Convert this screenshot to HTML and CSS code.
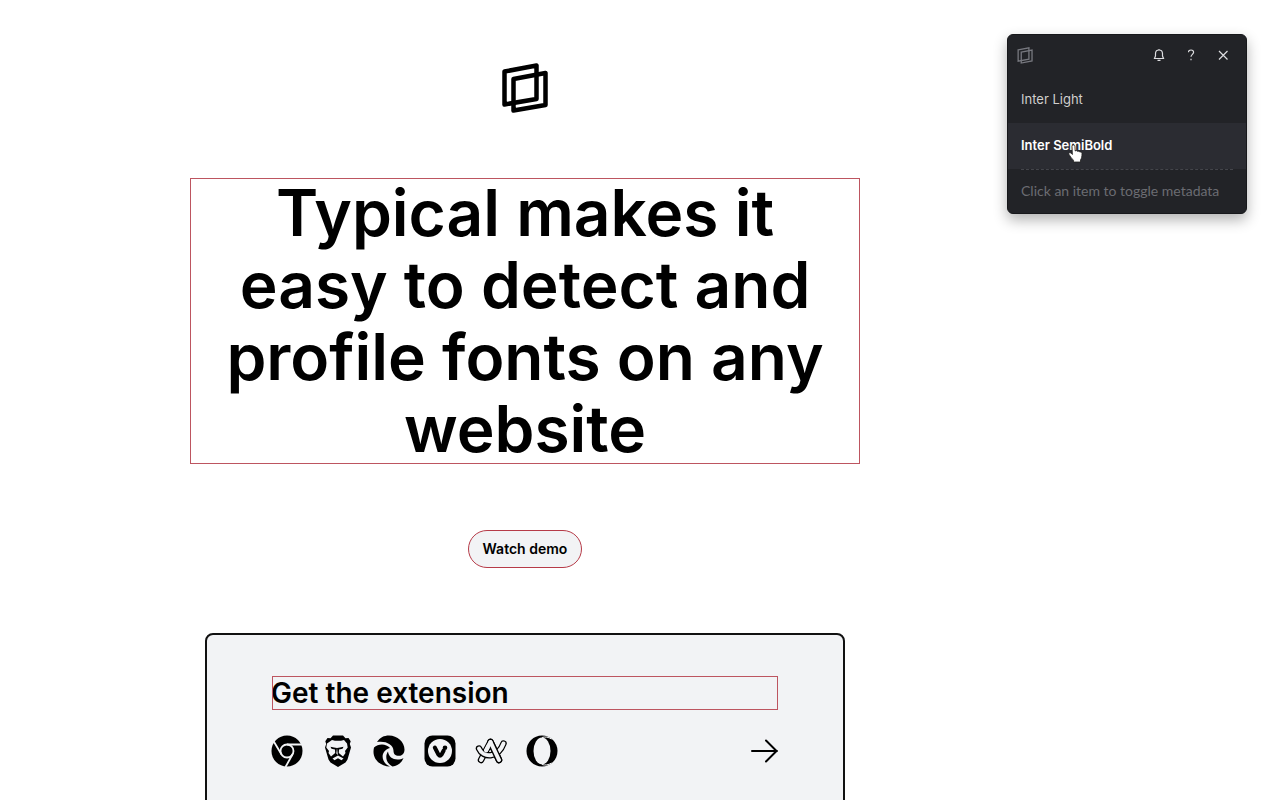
FILE: index.html
```html
<!DOCTYPE html>
<html lang="en">
<head>
<meta charset="utf-8">
<meta name="viewport" content="width=device-width, initial-scale=1">
<title>Typical</title>
<link rel="stylesheet" href="styles.css">
</head>
<body>
<main class="page">
  <svg class="logo" viewBox="0 0 48 52" fill="none" stroke="#000" stroke-width="4.500" stroke-linejoin="round" aria-label="Typical">
    <path d="M3.500 9.500 35.500 3.500V37L3.500 42.500Z"/><path d="M12.500 17 44.500 11V43L12.500 48.500Z"/>
  </svg>
  <h1 class="headline inspected">Typical makes it easy to detect and profile fonts on any website</h1>
  <button class="demo" type="button">Watch demo</button>
  <section class="card">
    <h2 class="card-title inspected">Get the extension</h2>
    <a class="browsers" href="#" aria-label="Get the extension for your browser">
      <svg class="browser" viewBox="0 0 32 32"><circle cx="16" cy="16" r="15.500"/><g fill="none" stroke="#f2f3f5" stroke-width="1.800"><circle cx="16" cy="16" r="6.500"/><path d="M16 9.500H31M10.400 19.300 2.500 6M21.600 19.300 14.500 32"/></g></svg>
      <svg class="browser" viewBox="0 0 32 32"><path d="M11 .5h10l2.500 2.700 3-.2 2.200 3.200-.9 2.800 1.200 3.500-3.500 12-2 3-7.500 4.500-7.500-4.500-2-3L3 12.500 4.200 9l-.9-2.800L5.500 3l3 .2z"/><path fill="#f2f3f5" d="m10 5 3 .7h6l3-.7 3 3.500.7 4-2.700 3.500.5 2-2.500 3.500-3-2.500-1.200-1 .2-3.500 3.500-.8 1-1.900-3.500.7-3 .5.700 5.500L16 20l-1.700-1.500.7-5.500-3-.5-3.500-.7 1 1.900 3.500.8.2 3.500-1.200 1-3 2.500L6.500 18l.5-2-2.700-3.500.7-4zM10.500 23.500l5.500-3 5.500 3-2 1.700-3.500-2-3.500 2z"/></svg>
      <svg class="browser" viewBox="0 0 32 32"><path d="M4 7C7 2.500 11 .5 16 .5c8.500 0 15.500 6.500 15.500 14 0 4-2.500 6.300-5.500 6.300-4 0-5.500-2-5.500-5C20.500 9 12 5.500 4 7z"/><path d="M1 12.500C5 8.500 13 8 17 13c-6 1.500-9 7-6.500 12.500 1 2.500 3 4.500 6.500 6C8 31.500.5 25 .5 17c0-1.500.1-3 .5-4.500z"/><path d="M15 16.500c.5 5 4.500 8 9.500 8 2.300 0 4.300-.5 6-1.500-2 5-6 8-11 8.500-6-3-8-10-4.500-15z"/></svg>
      <svg class="browser" viewBox="0 0 32 32"><rect x=".5" y=".5" width="31" height="31" rx="8"/><circle cx="16" cy="16" r="12" fill="#f2f3f5"/><path d="m10.800 12.500 3.700 7.200q1.500 2.300 3 0l2.200-4.200" fill="none" stroke="#000" stroke-width="4" stroke-linecap="round"/><circle cx="21" cy="12.800" r="2.300"/></svg>
      <svg class="browser" viewBox="0 0 32 32" fill="none" stroke-linecap="round" stroke-linejoin="round"><path d="m6 25 9.500-18 8.500 18" stroke="#000" stroke-width="6.500"/><path d="m6 25 9.500-18 8.500 18" stroke="#f2f3f5" stroke-width="4"/><path d="M4 13.500C8 23 23 23.500 28.500 8.500" stroke="#000" stroke-width="6.500"/><path d="M4 13.500C8 23 23 23.500 28.500 8.500" stroke="#f2f3f5" stroke-width="4"/><path d="M15.500 7 24 25" stroke="#000" stroke-width="6.500"/><path d="M15.500 7 24 25" stroke="#f2f3f5" stroke-width="4"/><path d="m11 15.500 4.500-8.500" stroke="#f2f3f5" stroke-width="4"/></svg>
      <svg class="browser" viewBox="0 0 32 32"><circle cx="16" cy="16" r="15.500"/><ellipse cx="16" cy="16" rx="8.500" ry="13.500" fill="#f2f3f5"/><path d="M16 2.500c3-1 6.500-.5 9.500 1.500M16 29.500c3 1 6.500.5 9.500-1.500" fill="none" stroke="#f2f3f5" stroke-width="1"/></svg>
      <svg class="arrow" viewBox="0 0 28 28" fill="none" stroke="#000" stroke-width="2" stroke-linecap="round" stroke-linejoin="round"><path d="M1 14h25M15 3.500 25.500 14 15 24.500"/></svg>
    </a>
  </section>
</main>
<aside class="panel" aria-label="Detected fonts">
  <header class="panel-bar">
    <svg class="panel-logo" viewBox="0 0 48 52" fill="none" stroke="#77787f" stroke-width="4" aria-hidden="true"><path d="M3 8.500 36 2.500V37L3 43.500Z"/><path d="M12.500 15.500 45.500 9.500V42.500L12.500 49Z"/></svg>
    <button class="tool" type="button" aria-label="Notifications"><svg class="tool-icon" viewBox="0 0 16 16"><path d="M3.500 11.500h9L11.500 9V6.800C11.500 4.500 10 3 8 3S4.500 4.500 4.500 6.800V9zM8 3V2M6.500 13.300h3"/></svg></button>
    <button class="tool" type="button" aria-label="Help"><svg class="tool-icon" viewBox="0 0 16 16"><path d="M5.500 5.300C5.500 3.700 6.500 3 8 3s2.600.8 2.600 2.300c0 2-2.600 2.200-2.600 4.500M8 11.700v1.500"/></svg></button>
    <button class="tool" type="button" aria-label="Close"><svg class="tool-icon" viewBox="0 0 16 16"><path d="m4 4 8.500 8.500M12.500 4 4 12.500"/></svg></button>
  </header>
  <button class="font light" type="button">Inter Light</button>
  <button class="font semibold" type="button">Inter SemiBold
    <svg class="pointer" viewBox="0 0 16 20" aria-hidden="true"><path d="M4 2.500C4 .5 6.800.5 6.900 2.500L7.200 7c1-.7 2-.4 2.400.4 1-.5 1.900-.2 2.200.7 1-.3 2.200.2 2.200 1.500 0 3-.5 5-1.500 6.400V18H5.500v-1.700C3.500 14.500 2 12 .9 10.200.4 8.800 1.900 8.200 2.900 9l1.500 1.500z" fill="#fff" stroke="#222" stroke-width=".8"/></svg>
  </button>
  <p class="hint">Click an item to toggle metadata</p>
</aside>
</body>
</html>
```
FILE: styles.css
```css
* { box-sizing: border-box; }
html, body { height: 100%; }
body {
  margin: 0;
  overflow: hidden;
  background: #fff;
  color: #000;
  font-family: Inter, sans-serif;
}
button { font-family: inherit; cursor: pointer; }
.page {
  display: flex;
  flex-direction: column;
  align-items: center;
  margin-right: 230px;
  padding: 62px 24px 0;
}
.logo { width: 48px; height: 52px; }
.inspected { outline: 1px solid #bd5560; outline-offset: -2px; }
.headline {
  width: 100%;
  max-width: 672px;
  margin: 63px 0 65px;
  padding: 0 32px;
  font-size: 64px;
  line-height: 72px;
  font-weight: 600;
  text-align: center;
}
.demo {
  padding: 0 14px;
  height: 38px;
  border: 1px solid #b63b48;
  border-radius: 19px;
  background: #f2f3f5;
  color: #000;
  font-size: 14px;
  line-height: 34px;
  font-weight: 600;
}
.card {
  width: 100%;
  max-width: 640px;
  margin-top: 65px;
  padding: 40px 64px 64px;
  border: 2px solid #111;
  border-radius: 8px;
  background: #f2f3f5;
}
.card-title {
  margin: 0;
  font-size: 28px;
  line-height: 36px;
  font-weight: 600;
}
.browsers { display: flex; align-items: center; gap: 19px; margin-top: 24px; }
.browser { width: 32px; height: 32px; }
.arrow { width: 28px; height: 28px; margin-left: auto; }
.panel {
  position: absolute;
  top: 34px;
  right: 33px;
  width: 240px;
  overflow: hidden;
  border: 1px solid #17181b;
  border-radius: 6px;
  background: #222327;
  box-shadow: 0 6px 14px rgba(0, 0, 0, .3);
}
.panel-bar { display: flex; align-items: center; padding: 4px 7px 4px 9px; }
.panel-logo { width: 16px; height: 17px; margin-right: auto; }
.tool {
  display: grid;
  place-items: center;
  width: 32px;
  height: 32px;
  padding: 0;
  border: 0;
  background: none;
}
.tool-icon { width: 16px; height: 16px; fill: none; stroke: #dddde0; stroke-width: 1.2; }
.font {
  position: relative;
  display: block;
  width: 100%;
  padding: 0 13px;
  border: 0;
  background: none;
  font-size: 13px;
  line-height: 46px;
  text-align: left;
}
.light { height: 48px; color: #d0cfcd; }
.semibold { height: 46px; background: #2b2c32; color: #fff; line-height: 44px; padding-bottom: 2px; font-weight: 600; }
.pointer { position: absolute; left: 60px; top: 21px; width: 16px; height: 20px; }
.hint {
  margin: 0 13px;
  padding-bottom: 2px;
  border-top: 1px dashed #44454b;
  color: #6b6c72;
  font-family: Lato, sans-serif;
  font-size: 14px;
  line-height: 41px;
}
```
